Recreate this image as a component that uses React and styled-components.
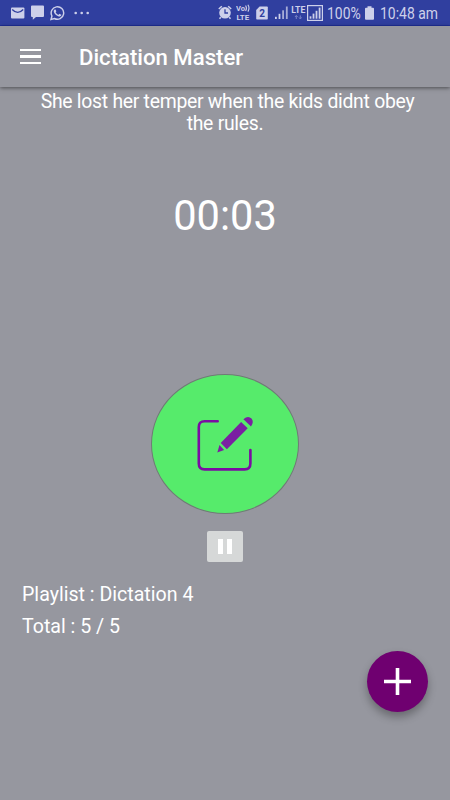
import React from 'react';
import styled, { createGlobalStyle } from 'styled-components';

const GlobalStyle = createGlobalStyle`
  * {
    box-sizing: border-box;
  }

  body {
    margin: 0;
    background-color: #96979f;
    font-family: Roboto, 'Liberation Sans', sans-serif;
  }
`;

const Screen = styled.div`
  position: relative;
  display: flex;
  flex-direction: column;
  width: 450px;
  height: 800px;
  overflow: hidden;
  background-color: #96979f;
  color: #fff;
`;

const StatusBar = styled.div`
  display: flex;
  align-items: center;
  justify-content: space-between;
  height: 26px;
  padding: 0 13px 0 11px;
  background-color: #303f9f;
  border-bottom: 1px solid #1f309b;
  color: #cdd0ea;
`;

const StatusGroup = styled.div`
  display: flex;
  align-items: center;
`;

const StatusItem = styled.div`
  flex: none;
  margin-left: ${(props) => props.$left || 0}px;

  svg {
    display: block;
  }
`;

const StatusText = styled.span`
  display: block;
  width: ${(props) => props.$width}px;
  margin-left: ${(props) => props.$left}px;
  font-size: 17px;
  line-height: 25px;
  white-space: nowrap;
  transform: translateY(1px) scaleX(${(props) => props.$squeeze});
  transform-origin: left center;
`;

const Toolbar = styled.header`
  display: flex;
  align-items: center;
  z-index: 1;
  height: 61px;
  padding-left: 20px;
  box-shadow: 0 1px 4px rgba(0, 0, 0, 0.5);
  background-color: #96979f;
`;

const MenuButton = styled.button`
  display: flex;
  flex-direction: column;
  justify-content: space-between;
  width: 21px;
  height: 15px;
  padding: 0;
  border: none;
  background: none;

  span {
    height: 2.4px;
    background-color: #fff;
  }
`;

const Title = styled.h1`
  margin: 0 0 0 38px;
  font-size: 22.15px;
  font-weight: 500;
  white-space: nowrap;
`;

const Content = styled.main`
  display: flex;
  flex-direction: column;
  align-items: center;
`;

const Sentence = styled.p`
  margin: 4px 0 0;
  padding-left: 5px;
  font-size: 19.4px;
  letter-spacing: -0.28px;
  line-height: 22px;
  text-align: center;
  white-space: nowrap;

  span {
    display: block;
  }

  span + span {
    padding-right: 5px;
  }
`;

const Timer = styled.div`
  margin-top: 55px;
  font-size: 41.6px;
  line-height: 52px;
`;

const WriteButton = styled.button`
  display: flex;
  align-items: center;
  justify-content: center;
  width: 148px;
  height: 140px;
  margin-top: 132px;
  padding: 0 0 2px 1px;
  border: 1px solid #707a76;
  border-radius: 50%;
  background-color: #56eb6b;
`;

const PauseButton = styled.button`
  display: flex;
  align-items: center;
  justify-content: center;
  gap: 4px;
  width: 36px;
  height: 31px;
  margin-top: 17px;
  padding: 0;
  border: none;
  border-radius: 2px;
  background-color: #d6d8d8;

  span {
    width: 5px;
    height: 15px;
    background-color: #fff;
  }
`;

const Details = styled.div`
  align-self: flex-start;
  margin: 17px 0 0 22px;
  font-size: 19.6px;
  line-height: 31.5px;

  p {
    margin: 0;
  }
`;

const AddButton = styled.button`
  position: absolute;
  right: 22px;
  bottom: 88px;
  display: flex;
  align-items: center;
  justify-content: center;
  width: 61px;
  height: 61px;
  padding: 0;
  border: none;
  border-radius: 50%;
  background-color: #6f0070;
  box-shadow: 0 5px 8px rgba(0, 0, 0, 0.3);
`;

const MailIcon = () => (
  <svg width="14" height="12" viewBox="0 0 14 12">
    <rect x="0" y="0.5" width="13.4" height="11" rx="1" fill="currentColor" />
    <path d="M1.2 2.5 Q6.7 8.3 12.2 2.5" fill="none" stroke="#303f9f" strokeWidth="1.3" />
  </svg>
);

const ChatIcon = () => (
  <svg width="13" height="15" viewBox="0 0 13 15">
    <path d="M1 0.5h11q1 0 1 1v9.5q0 1-1 1H5L1.8 14.7V12H1q-1 0-1-1V1.5q0-1 1-1z" fill="currentColor" />
  </svg>
);

const PhoneIcon = () => (
  <svg width="15" height="16" viewBox="0 0 24 24">
    <path
      fill="currentColor"
      d="M17.472 14.382c-.297-.149-1.758-.867-2.03-.967-.273-.099-.471-.148-.67.15-.197.297-.767.966-.94 1.164-.173.199-.347.223-.644.075-.297-.15-1.255-.463-2.39-1.475-.883-.788-1.48-1.761-1.653-2.059-.173-.297-.018-.458.13-.606.134-.133.298-.347.446-.52.149-.174.198-.298.298-.497.099-.198.05-.371-.025-.52-.075-.149-.669-1.612-.916-2.207-.242-.579-.487-.5-.669-.51-.173-.008-.371-.01-.57-.01-.198 0-.52.074-.792.372-.272.297-1.04 1.016-1.04 2.479 0 1.462 1.065 2.875 1.213 3.074.149.198 2.096 3.2 5.077 4.487.709.306 1.262.489 1.694.625.712.227 1.36.195 1.871.118.571-.085 1.758-.719 2.006-1.413.248-.694.248-1.289.173-1.413-.074-.124-.272-.198-.57-.347"
    />
    <path
      fill="none"
      stroke="currentColor"
      strokeWidth="2.3"
      d="M1.6 22.4l1.5-5.6a10 10 0 1 1 4 4z"
    />
  </svg>
);

const MoreIcon = () => (
  <svg width="16" height="4" viewBox="0 0 16 4">
    <circle cx="1.7" cy="2" r="1.3" fill="currentColor" />
    <circle cx="7.7" cy="2" r="1.3" fill="currentColor" />
    <circle cx="13.7" cy="2" r="1.3" fill="currentColor" />
  </svg>
);

const AlarmIcon = () => (
  <svg width="14" height="15" viewBox="0 0 14 15">
    <circle cx="7" cy="7.8" r="5.8" fill="currentColor" />
    <path d="M0.8 4L3.8 1.2M10.2 1.2L13.2 4M2.8 12.2L1.5 13.8M11.2 12.2L12.5 13.8" stroke="currentColor" strokeWidth="1.5" />
    <path d="M7 4.3V8h3" fill="none" stroke="#303f9f" strokeWidth="1.3" />
  </svg>
);

const VolteIcon = () => (
  <svg width="15" height="17" viewBox="0 0 15 17" fill="currentColor" fontFamily="Roboto, sans-serif" fontWeight="700">
    <text x="0" y="7" fontSize="7.6" textLength="9" lengthAdjust="spacingAndGlyphs">Vo</text>
    <text x="0.4" y="15.8" fontSize="7.6" textLength="12.8" lengthAdjust="spacingAndGlyphs">LTE</text>
    <path d="M9.6 1.5q1.7 2.5 0 5.5M11.9 0.8q2.2 3.3 0 6.8" fill="none" stroke="currentColor" strokeWidth="1.1" />
  </svg>
);

const SimIcon = () => (
  <svg width="12" height="14" viewBox="0 0 12 14">
    <path d="M3.6 0.5H11q.8 0 .8.8v11.4q0 .8-.8.8H1q-.8 0-.8-.8V4z" fill="currentColor" />
    <text x="6.1" y="11" fontSize="10" fontFamily="Roboto, sans-serif" fontWeight="700" textAnchor="middle" fill="#303f9f">2</text>
  </svg>
);

const SignalIcon = () => (
  <svg width="13" height="13" viewBox="0 0 13 13" fill="currentColor">
    <rect x="0" y="10.8" width="1.8" height="2.2" />
    <rect x="3.6" y="7.8" width="1.8" height="5.2" />
    <rect x="7.2" y="4.3" width="1.8" height="8.7" opacity="0.75" />
    <rect x="10.9" y="0.5" width="1.8" height="12.5" opacity="0.75" />
  </svg>
);

const LteIcon = () => (
  <svg width="15" height="16" viewBox="0 0 15 16">
    <text x="0.3" y="7.6" fontSize="8.6" textLength="14" lengthAdjust="spacingAndGlyphs" fill="currentColor" fontFamily="Roboto, sans-serif" fontWeight="700">LTE</text>
    <path d="M5.3 14V10.8M4 12l1.3-1.6L6.6 12M9.3 10.4v3.4M8 12.4l1.3 1.6 1.3-1.6" fill="none" stroke="#7781c5" strokeWidth="1" />
  </svg>
);

const BoxedSignalIcon = () => (
  <svg width="16" height="16" viewBox="0 0 16 16" fill="currentColor">
    <rect x="0.6" y="0.6" width="14.8" height="14.8" fill="none" stroke="currentColor" strokeWidth="1.2" />
    <rect x="2.6" y="11.3" width="1.8" height="2.4" />
    <rect x="5.6" y="8.6" width="1.8" height="5.1" />
    <rect x="8.6" y="5.8" width="1.8" height="7.9" />
    <rect x="11.7" y="2.6" width="1.8" height="11.1" />
  </svg>
);

const BatteryIcon = () => (
  <svg width="9" height="14" viewBox="0 0 9 14">
    <path d="M2.5 0.2h4V1.7H8q1 0 1 1V13q0 .8-1 .8H1q-1 0-1-.8V2.7q0-1 1-1h1.5z" fill="currentColor" />
  </svg>
);

// notepad outline with the pencil lying over its open corner
const WriteIcon = () => (
  <svg width="58" height="57" viewBox="0 0 58 57">
    <path
      d="M20.7 6.2H7.6q-5.8 0-5.8 5.8v36.6q0 5.8 5.8 5.8h40q5.8 0 5.8-5.8V35"
      fill="none"
      stroke="#7b0ca3"
      strokeWidth="2.6"
      strokeLinecap="round"
    />
    <g fill="#7a1fa2">
      <path d="M20.3 37.4l2.2-7.3 4.6 4.8z" />
      <path d="M23.7 27.9L44.1 6.9l6.6 6.4-20.8 20.9z" />
      <path d="M46.4 4.3q4.7-4.2 8.1-.7 2.8 3.4-.5 7.8z" />
    </g>
  </svg>
);

const App = () => {
  return (
    <Screen>
      <GlobalStyle />
      <StatusBar>
        <StatusGroup>
          <StatusItem><MailIcon /></StatusItem>
          <StatusItem $left={6}><ChatIcon /></StatusItem>
          <StatusItem $left={6}><PhoneIcon /></StatusItem>
          <StatusItem $left={9}><MoreIcon /></StatusItem>
        </StatusGroup>
        <StatusGroup>
          <StatusItem><AlarmIcon /></StatusItem>
          <StatusItem $left={4}><VolteIcon /></StatusItem>
          <StatusItem $left={5}><SimIcon /></StatusItem>
          <StatusItem $left={7}><SignalIcon /></StatusItem>
          <StatusItem $left={3}><LteIcon /></StatusItem>
          <StatusItem $left={1}><BoxedSignalIcon /></StatusItem>
          <StatusText $width={34} $left={4} $squeeze={0.82}>100%</StatusText>
          <StatusItem $left={4}><BatteryIcon /></StatusItem>
          <StatusText $width={57} $left={6} $squeeze={0.82}>10:48 am</StatusText>
        </StatusGroup>
      </StatusBar>

      <Toolbar>
        <MenuButton aria-label="Menu">
          <span />
          <span />
          <span />
        </MenuButton>
        <Title>Dictation Master</Title>
      </Toolbar>

      <Content>
        <Sentence>
          <span>She lost her temper when the kids didnt obey</span>
          <span>the rules.</span>
        </Sentence>
        <Timer>00:03</Timer>
        <WriteButton aria-label="Write">
          <WriteIcon />
        </WriteButton>
        <PauseButton aria-label="Pause">
          <span />
          <span />
        </PauseButton>
        <Details>
          <p>Playlist : Dictation 4</p>
          <p>Total : 5 / 5</p>
        </Details>
      </Content>

      <AddButton aria-label="Add">
        <svg width="27" height="27" viewBox="0 0 27 27">
          <path d="M13.5 0v27M0 13.5h27" stroke="#fff" strokeWidth="3.6" />
        </svg>
      </AddButton>
    </Screen>
  );
};

export default App;
